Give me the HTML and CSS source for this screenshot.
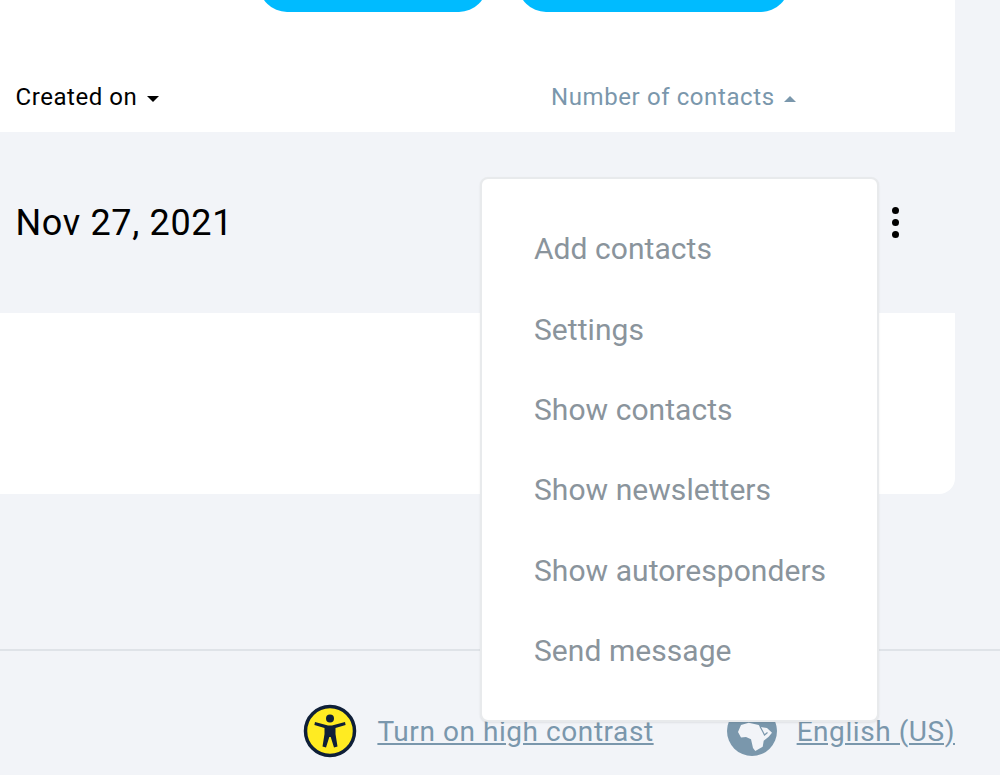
FILE: index.html
```html
<!DOCTYPE html>
<html lang="en">
<head>
  <meta charset="UTF-8">
  <meta name="viewport" content="width=device-width, initial-scale=1.0">
  <title>Lists</title>
  <link rel="stylesheet" href="styles.css">
</head>
<body>
  <!-- List panel -->
  <div class="panel">
    <div class="actions">
      <span class="action action-first"></span>
      <span class="action action-second"></span>
    </div>
    <div class="table-head">
      <span class="col-created">Created on <i class="caret caret-down"></i></span>
      <span class="col-contacts">Number of contacts <i class="caret caret-up"></i></span>
    </div>
    <div class="table-row">
      <span class="row-date">Nov 27, 2021</span>
      <span class="row-more"><i></i><i></i><i></i></span>
    </div>
  </div>

  <!-- Footer -->
  <div class="footer">
    <div class="footer-item">
      <svg class="footer-icon" width="54" height="54" viewBox="0 0 54 54">
        <circle cx="27" cy="27" r="24.5" fill="#ffeb22" stroke="#0f1f38" stroke-width="3.5"/>
        <circle cx="27" cy="14.5" r="4" fill="#0f1f38"/>
        <path d="M12 18 L25 21.5 H29 L42 18 L42.6 21 L32.5 24 V30 L34.5 42.5 L31 43.5 L27.7 33 H26.3 L23 43.5 L19.5 42.5 L21.5 30 V24 L11.4 21 Z" fill="#0f1f38"/>
      </svg>
      <a class="footer-link" href="#">Turn on high contrast</a>
    </div>
    <div class="footer-item footer-lang">
      <svg class="footer-icon" width="50" height="50" viewBox="0 0 50 50">
        <circle cx="25" cy="25" r="25" fill="#7a97ac"/>
        <path d="M11 26 L14 19 L21.7 16.7 L31.7 19 L33 21 L40 22 L45 26.7 L41.7 30.7 L36.7 34.7 L35.7 40.7 L28.3 45 L26 42 L24 33.3 L19 31 L14 31.5 Z" fill="#f2f4f8"/>
        <path d="M33 20.5 L36 26 L37.5 29 L40.5 26.5" fill="none" stroke="#7a97ac" stroke-width="1.2"/>
      </svg>
      <a class="footer-link" href="#">English (US)</a>
    </div>
  </div>

  <!-- Row menu -->
  <div class="menu">
    <a class="menu-item" href="#">Add contacts</a>
    <a class="menu-item" href="#">Settings</a>
    <a class="menu-item" href="#">Show contacts</a>
    <a class="menu-item" href="#">Show newsletters</a>
    <a class="menu-item" href="#">Show autoresponders</a>
    <a class="menu-item" href="#">Send message</a>
  </div>
</body>
</html>
```

FILE: styles.css
```css
/* General Styles */
html, body {
  height: 100%;
}

body {
  margin: 0;
  background-color: #f2f4f8;
  font-family: Roboto, 'Liberation Sans', sans-serif;
  color: #000000;
  overflow: hidden;
  position: relative;
}

/* Panel */
.panel {
  width: 955px;
  height: 494px;
  background-color: #ffffff;
  border-bottom-right-radius: 16px;
}

/* Buttons cut off by the top of the window */
.actions {
  height: 12px;
  display: flex;
  overflow: hidden;
  align-items: flex-end;
}

.action {
  display: block;
  flex-shrink: 0;
  height: 56px;
  background-color: #00bbff;
  border-radius: 28px;
}

.action-first {
  width: 228px;
  margin-left: 259px;
}

.action-second {
  width: 271px;
  margin-left: 31px;
}

.table-head {
  height: 120px;
  display: flex;
  align-items: center;
  padding: 50px 0 0 15.5px;
  box-sizing: border-box;
  font-size: 24px;
  letter-spacing: 0.55px;
}

.col-created {
  width: 535.5px;
}

.col-contacts {
  color: #7a97ac;
  letter-spacing: 0.6px;
}

.caret {
  display: inline-block;
  width: 0;
  height: 0;
  margin-left: 3px;
  border-left: 6px solid transparent;
  border-right: 6px solid transparent;
  vertical-align: 3px;
}

.caret-down {
  border-top: 6px solid #000000;
}

.caret-up {
  border-bottom: 6px solid #7a97ac;
}

.table-row {
  height: 181px;
  background-color: #f2f4f8;
  display: flex;
  justify-content: space-between;
  padding: 0 56px 0 15.5px;
  box-sizing: border-box;
}

.row-date {
  font-size: 36px;
  line-height: 42px;
  margin-top: 70px;
  letter-spacing: 0.65px;
}

.row-more {
  display: flex;
  flex-direction: column;
  gap: 5px;
  margin-top: 75px;
}

.row-more i {
  display: block;
  width: 7px;
  height: 7px;
  border-radius: 50%;
  background-color: #000000;
}

/* Footer */
.footer {
  margin-top: 155px;
  height: 125px;
  border-top: 2px solid #dfe3e8;
  display: flex;
  justify-content: flex-end;
  padding: 53px 45px 0 0;
  box-sizing: border-box;
  font-size: 28px;
  letter-spacing: 0.56px;
}

.footer-item {
  display: flex;
  align-items: center;
  height: 54px;
}

.footer-lang {
  margin-left: 73px;
}

.footer-icon {
  flex-shrink: 0;
  margin-right: 20px;
}

.footer-link {
  color: #7a97ac;
}

/* Row menu */
.menu {
  position: absolute;
  left: 480px;
  top: 177px;
  width: 399px;
  height: 545px;
  box-sizing: border-box;
  padding: 30.4px 0 0 52px;
  background-color: #ffffff;
  border: 2px solid #e8eaec;
  border-radius: 8px;
  box-shadow: 0 1px 2px rgba(0, 0, 0, 0.08);
  display: flex;
  flex-direction: column;
}

.menu-item {
  height: 80.33px;
  line-height: 80px;
  font-size: 30px;
  letter-spacing: 0.05px;
  color: #8a949c;
  text-decoration: none;
  flex-shrink: 0;
}
```
